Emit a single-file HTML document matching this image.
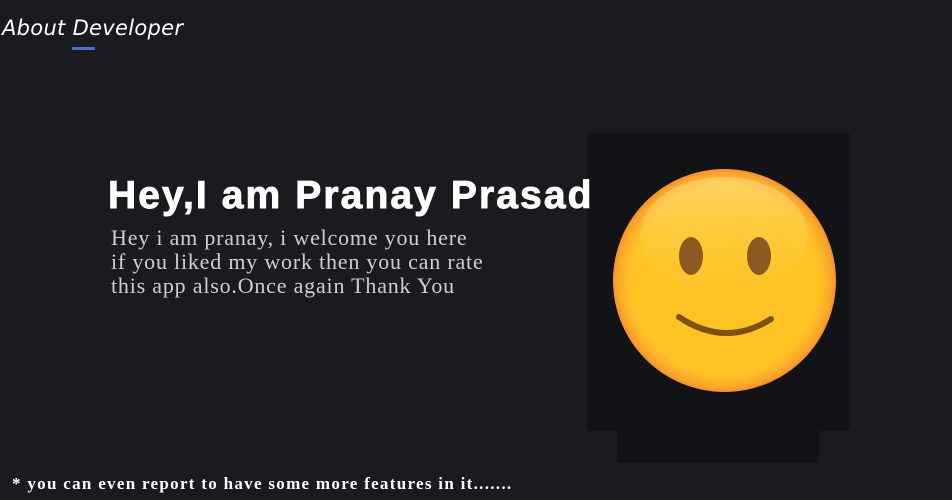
<!DOCTYPE html>
<html><head><style>
html,body{margin:0;padding:0;width:952px;height:500px;background:#1a1b1f;overflow:hidden;position:relative}
.t{position:absolute;left:2px;top:16px;font-family:"Comic Sans MS","DejaVu Sans",sans-serif;font-style:italic;color:#fff;font-size:21px;letter-spacing:0.3px}
.ul{position:absolute;left:72px;top:47px;width:23px;height:3px;background:#4a6fd0;border-radius:1px}
h1{position:absolute;z-index:5;left:108px;top:174px;margin:0;font-family:"Liberation Sans",sans-serif;font-weight:bold;font-size:39px;color:#fff;white-space:nowrap;letter-spacing:2.1px;-webkit-text-stroke:0.9px #fff}
.p{position:absolute;left:111px;top:226px;font-family:"Liberation Serif",serif;font-size:22px;line-height:24px;color:#cfcfcf;letter-spacing:0.8px;white-space:nowrap}
.box{position:absolute;left:587px;top:133px;width:263px;height:298px;background:#121317;border-radius:3px}
.box2{position:absolute;left:617px;top:431px;width:202px;height:32px;background:#121317}
.f{position:absolute;left:12px;top:474px;font-family:"Liberation Serif",serif;font-weight:bold;font-size:17px;color:#fff;letter-spacing:1.3px;white-space:nowrap}
svg{position:absolute;left:0;top:0}
</style></head><body>
<div class="t">About Developer</div><div class="ul"></div>
<div class="p">Hey i am pranay, i welcome you here<br>if you liked my work then you can rate<br>this app also.Once again Thank You</div>
<div class="box"></div><div class="box2"></div>
<svg width="952" height="500">
<defs>
<radialGradient id="g" cx="0.5" cy="0.5" r="0.5">
<stop offset="0.85" stop-color="#ffc324"/><stop offset="0.96" stop-color="#fba62a"/><stop offset="1" stop-color="#f5902a"/></radialGradient>
<linearGradient id="h" x1="0" y1="0" x2="0" y2="1"><stop offset="0" stop-color="#fff3d0" stop-opacity="0.8"/><stop offset="1" stop-color="#ffd24a" stop-opacity="0.1"/></linearGradient>
</defs>
<circle cx="724.5" cy="280.5" r="111.5" fill="url(#g)"/>
<ellipse cx="724" cy="235" rx="84" ry="58" fill="url(#h)" opacity="0.45"/>
<ellipse cx="691" cy="256" rx="12" ry="19" fill="#8a5a22"/>
<ellipse cx="759" cy="256" rx="12" ry="19" fill="#8a5a22"/>
<path d="M679 317 Q725 348 771 319" stroke="#7a5218" stroke-width="6" fill="none" stroke-linecap="round"/>
</svg>
<h1>Hey,I am Pranay Prasad</h1>
<div class="f">* you can even report to have some more features in it.......</div>
</body></html>
